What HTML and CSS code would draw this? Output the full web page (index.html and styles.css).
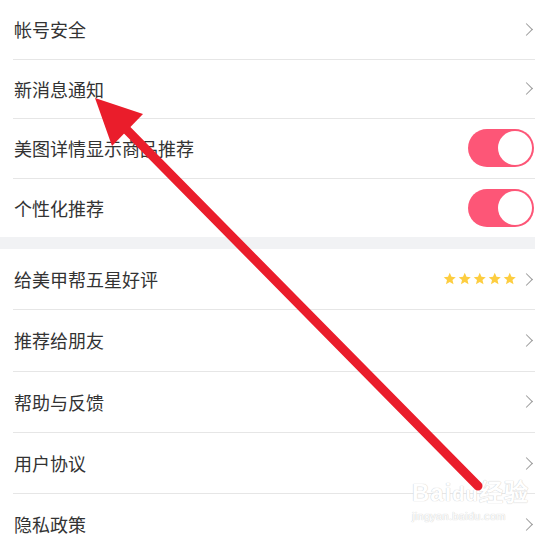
FILE: index.html
```html
<!DOCTYPE html>
<html lang="zh-CN">
<head>
<meta charset="utf-8">
<title>设置</title>
<link rel="stylesheet" href="styles.css">
</head>
<body>
<div class="page">
  <ul class="group group-top">
    <li class="row"><span class="label">帐号安全</span><span class="chev"></span></li>
    <li class="row"><span class="label">新消息通知</span><span class="chev"></span></li>
    <li class="row"><span class="label">美图详情显示商品推荐</span><span class="toggle"><span class="knob"></span></span></li>
    <li class="row"><span class="label">个性化推荐</span><span class="toggle"><span class="knob"></span></span></li>
  </ul>
  <div class="band"></div>
  <ul class="group group-bottom">
    <li class="row"><span class="label">给美甲帮五星好评</span>
      <span class="stars">
        <svg class="star" viewBox="0 0 24 24"><path d="M12 1.5l3.1 7 7.6.7-5.8 5 1.8 7.4L12 17.7 5.3 21.6l1.8-7.4-5.8-5 7.6-.7z"/></svg>
        <svg class="star" viewBox="0 0 24 24"><path d="M12 1.5l3.1 7 7.6.7-5.8 5 1.8 7.4L12 17.7 5.3 21.6l1.8-7.4-5.8-5 7.6-.7z"/></svg>
        <svg class="star" viewBox="0 0 24 24"><path d="M12 1.5l3.1 7 7.6.7-5.8 5 1.8 7.4L12 17.7 5.3 21.6l1.8-7.4-5.8-5 7.6-.7z"/></svg>
        <svg class="star" viewBox="0 0 24 24"><path d="M12 1.5l3.1 7 7.6.7-5.8 5 1.8 7.4L12 17.7 5.3 21.6l1.8-7.4-5.8-5 7.6-.7z"/></svg>
        <svg class="star" viewBox="0 0 24 24"><path d="M12 1.5l3.1 7 7.6.7-5.8 5 1.8 7.4L12 17.7 5.3 21.6l1.8-7.4-5.8-5 7.6-.7z"/></svg>
      </span><span class="chev"></span></li>
    <li class="row"><span class="label">推荐给朋友</span><span class="chev"></span></li>
    <li class="row"><span class="label">帮助与反馈</span><span class="chev"></span></li>
    <li class="row"><span class="label">用户协议</span><span class="chev"></span></li>
    <li class="row"><span class="label">隐私政策</span><span class="chev"></span></li>
  </ul>

  <div class="watermark">
    <div class="wm-logo">Bai<span class="wm-du">du</span>经验</div>
    <div class="wm-url">jingyan.baidu.com</div>
  </div>

  <svg class="arrow" width="535" height="540" viewBox="0 0 535 540">
    <line x1="122" y1="125" x2="478" y2="486" stroke="#ea1d2b" stroke-width="9" stroke-linecap="round"/>
    <polygon points="95,98 143,114 112,146" fill="#ea1d2b"/>
  </svg>
</div>
</body>
</html>
```

FILE: styles.css
```css
* { box-sizing: border-box; }
html, body { margin: 0; padding: 0; background: #fff; }
body {
  font-family: "Noto Sans CJK SC", "Noto Sans", sans-serif;
  color: #333;
  width: 535px;
  height: 540px;
  overflow: hidden;
}
.page { position: relative; width: 535px; height: 540px; }
.group { list-style: none; margin: 0; padding: 0 0 0 13px; }
.row {
  display: flex;
  align-items: center;
  border-bottom: 1px solid #e6e6e6;
  padding-left: 1px;
}
.group-top .row { height: 59.5px; }
.group-top .row:last-child { border-bottom: none; height: 58.5px; }
.group-bottom .row { height: 61.3px; }
.label { font-size: 18px; line-height: 1; flex: 1; }
.chev {
  width: 9px; height: 9px;
  border-top: 1.4px solid #9a9a9a;
  border-right: 1.4px solid #9a9a9a;
  transform: rotate(45deg);
  margin-right: 4px;
}
.stars {
  display: flex;
  gap: 1.5px;
  margin-right: 6px;
}
.star { width: 13.5px; height: 13.5px; fill: #fdcd3f; display: block; }
.toggle {
  width: 66px; height: 38px;
  border-radius: 19px;
  background: #fd5677;
  display: flex;
  align-items: center;
  justify-content: flex-end;
  padding: 2px;
  margin-right: 1px;
}
.knob {
  width: 34px; height: 34px;
  border-radius: 50%;
  background: #fff;
}
.band { height: 12px; background: #f1f2f4; }
.watermark {
  position: absolute;
  left: 412px; top: 478px;
  color: #fff;
  text-shadow: 0 0 1px #d0d0d0, 0 0 1px #d0d0d0;
  font-family: "Liberation Sans", Arial, sans-serif;
}
.wm-logo { font-size: 24px; font-weight: bold; line-height: 30px; letter-spacing: 1px; }
.wm-du { font-size: 20px; }
.wm-url { font-size: 11px; line-height: 14px; letter-spacing: 0.3px; }
.arrow { position: absolute; left: 0; top: 0; pointer-events: none; }
```
